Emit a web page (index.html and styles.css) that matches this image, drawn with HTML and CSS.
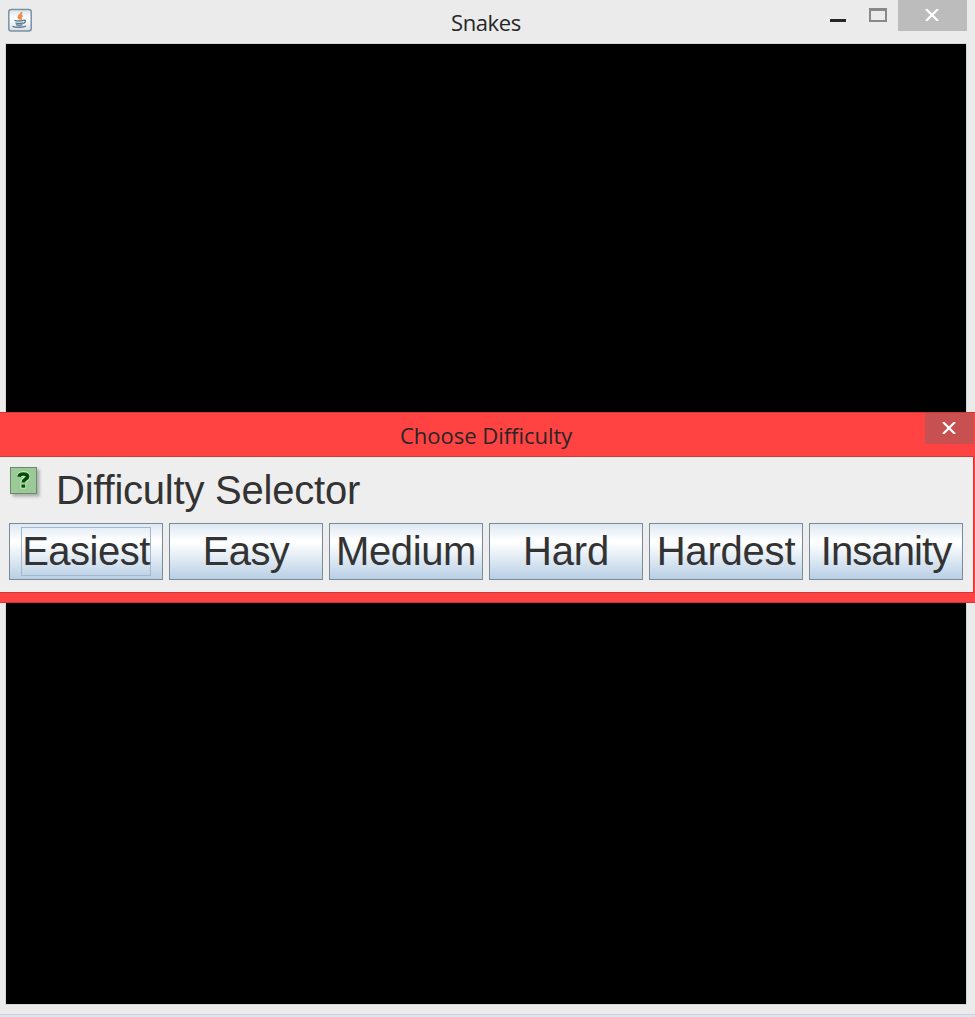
FILE: index.html
```html
<!DOCTYPE html>
<html lang="en">
<head>
<meta charset="utf-8">
<title>Snakes</title>
<link rel="stylesheet" href="styles.css">
</head>
<body>
<main class="window">
  <header class="titlebar">
    <svg class="java-icon" width="24" height="24" viewBox="0 0 24 24">
      <defs><linearGradient id="tile" x1="0" y1="0" x2="0" y2="1"><stop offset="0" stop-color="#dde2e6"/><stop offset=".4" stop-color="#fff"/><stop offset="1" stop-color="#d9dee2"/></linearGradient></defs>
      <rect x=".8" y="1.500" width="22.400" height="21.500" rx="2.500" fill="url(#tile)" stroke="#7892a5" stroke-width="1.500"/>
      <path d="M13.500 4c1 2.200-3.600 3.200-3 5.200.2.900 1.200 1.400 1.500 2.400M14.500 7.500c-2 .8-2.300 1.800-1.500 2.700.3.500.2 1-.1 1.500" fill="none" stroke="#ee893f" stroke-width="1.900"/>
      <path d="M6.500 12.300c2 1 7 .9 9 .1M7.500 14.800c2 .8 5.500.8 7.500 0M8 16.700c2 .8 4.500.8 6.500 0M15.500 12.200c3-.6 2.200 2.600-.6 3.200M4.500 18.300c3 1.300 11 1.300 13.500-.3" fill="none" stroke="#55788f" stroke-width="1.400"/>
    </svg>
    <h1 class="title title-main">Snakes</h1>
    <div class="controls">
      <span class="minimize"></span>
      <span class="maximize"></span>
      <span class="close"><svg width="14" height="12" viewBox="0 0 14 12"><path d="M1 0l12 12M13 0L1 12" stroke="#fff" stroke-width="2.200"/></svg></span>
    </div>
  </header>
  <div class="canvas"></div>
</main>
<section class="dialog">
  <header class="dialog-bar">
    <h2 class="title title-dialog">Choose Difficulty</h2>
    <span class="dialog-close"><svg width="14" height="12" viewBox="0 0 14 12"><path d="M1 0l12 12M13 0L1 12" stroke="#fff" stroke-width="2.200"/></svg></span>
  </header>
  <div class="dialog-body">
    <div class="prompt">
      <svg class="question" width="32" height="32" viewBox="0 0 32 32">
        <rect x="2.500" y="2.500" width="27" height="27" fill="#aaa" class="shade"/>
        <rect x=".5" y=".5" width="26" height="26" fill="#9bc998" stroke="#668d6a"/>
        <g fill="none" stroke="#c6f5c2" stroke-width="5.500"><path d="M9.500 9.500C10 6.500 17.500 6 17.500 9.500c0 2.500-4.300 2.500-4.300 6.300"/><path d="M13.200 17v4.500"/></g>
        <path d="M9 9.800C9.500 6.200 17.700 6.200 17.700 9.600c0 2.500-4.400 2.600-4.400 5.900" fill="none" stroke="#064b08" stroke-width="3.600"/>
        <rect x="11.400" y="17.500" width="3.800" height="3.200" fill="#064b08"/>
      </svg>
      <span class="label">Difficulty Selector</span>
    </div>
    <div class="buttons">
      <button class="choice easiest"><span class="focus"><span class="caption">Easiest</span></span></button>
      <button class="choice easy"><span class="caption">Easy</span></button>
      <button class="choice medium"><span class="caption">Medium</span></button>
      <button class="choice hard"><span class="caption">Hard</span></button>
      <button class="choice hardest"><span class="caption">Hardest</span></button>
      <button class="choice insanity"><span class="caption">Insanity</span></button>
    </div>
  </div>
</section>
</body>
</html>
```
FILE: styles.css
```css
* { box-sizing: border-box; }
body { margin: 0; height: 1017px; overflow: hidden; position: relative; background: #dfe3f0; }
.window { height: 1015px; background: #ebebeb; border-bottom: 1px solid #cfcfcf; padding: 0 8px 0 5px; }
.titlebar { height: 43px; display: flex; align-items: flex-start; justify-content: space-between; padding-left: 3px; }
.java-icon { margin-top: 8px; flex: none; }
.title { margin: 0; font-family: "Open Sans", "Noto Sans", sans-serif; font-size: 22px; font-weight: 400; line-height: 30px; color: #262626; white-space: nowrap; }
.title-main { margin: 7px 0 0 419px; letter-spacing: -.4px; }
.controls { display: flex; margin-left: auto; }
.minimize { width: 16px; height: 3px; margin: 19px 23px 0 0; background: #262626; }
.maximize { width: 18px; height: 14px; margin: 8px 11px 0 0; border: 2px solid #898989; border-top-width: 3px; }
.close { width: 69px; height: 31px; background: #bcbcbc; display: flex; justify-content: center; padding: 9px 1px 0 0; }
.canvas { height: 962px; width: 962px; background: #000; border: 1px solid #d6d6d6; }
.dialog { position: absolute; left: 0; top: 412px; width: 975px; height: 191px; background: #ff4343; border-top: 1px solid #cf3636; border-bottom: 1px solid #cf3636; }
.dialog-bar { height: 43px; display: flex; justify-content: space-between; }
.title-dialog { margin: 7px 0 0 400px; letter-spacing: -.02px; }
.dialog-close { width: 49px; height: 31px; margin-right: 1px; background: #c75050; display: flex; justify-content: center; padding: 9px 1px 0 0; }
.dialog-body { width: 974px; height: 137px; background: #eee; border: 1px solid #d43636; border-left: 0; padding: 10px 0 0 9px; }
.prompt { display: flex; height: 56px; padding-left: 1px; }
.question { overflow: visible; flex: none; }
.shade { filter: blur(1.5px); }
.label { margin-left: 14px; font: 40px/46px "Liberation Sans", Arial, sans-serif; letter-spacing: -.22px; color: #333; white-space: nowrap; }
.buttons { display: flex; gap: 6px; }
.choice { width: 154px; height: 57px; padding: 0; display: flex; align-items: center; justify-content: center; border: 1px solid #7a8a99; background: linear-gradient(#dde8f3 0%, #fff 30%, #fff 34%, #b8cfe5 100%); font: 40px/46px "Liberation Sans", Arial, sans-serif; color: #333; white-space: nowrap; }
.caption { padding-bottom: 2px; }
.easiest { letter-spacing: -.5px; }
.easy { letter-spacing: -.6px; }
.medium { letter-spacing: -.4px; }
.hard { letter-spacing: -.2px; }
.hardest { letter-spacing: -.2px; }
.insanity { letter-spacing: -.9px; }
.focus { width: 130px; height: 49px; border: 1px solid #a3b8cc; display: flex; justify-content: center; align-items: center; }
```
